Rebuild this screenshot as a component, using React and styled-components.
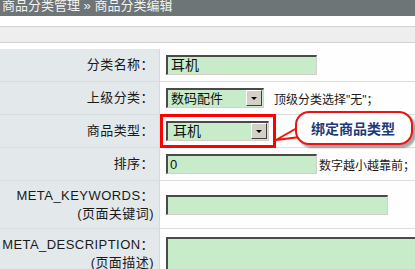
import styled, { createGlobalStyle } from "styled-components";

const GlobalStyle = createGlobalStyle`
  body {
    margin: 0;
    background: #fff;
    font-family: "Liberation Sans", "Noto Sans CJK SC", sans-serif;
    font-size: 13px;
    color: #1a1a1a;
    overflow: hidden;
  }
`;

const Page = styled.div`
  position: relative;
  width: 415px;
  height: 269px;
  overflow: hidden;
`;

const TitleBar = styled.div`
  height: 16px;
  background: #6e7576;
  color: #f2f2f2;
  font-size: 13px;
  line-height: 11px;
  padding-left: 2px;
  white-space: nowrap;
  overflow: hidden;
`;

const SubBar = styled.div`
  margin: 10px 0 6px;
  height: 15px;
  background: #eeeeee;
  border-top: 1px solid #d3d3d3;
  border-bottom: 1px solid #d3d3d3;
`;

const Row = styled.div`
  display: grid;
  grid-template-columns: 160px 1fr;
  height: ${(p) => p.$h || 32}px;
  border-bottom: 1px solid #dadddf;
`;

const Label = styled.div`
  display: flex;
  flex-direction: column;
  justify-content: ${(p) => (p.$top ? "flex-start" : "center")};
  align-items: flex-end;
  padding: ${(p) => (p.$top ? "7px 5px 0 0" : "0 5px 0 0")};
  background: #e3e8eb;
  border-right: 1px solid #d5d9dc;
  line-height: 18px;
  letter-spacing: 0.45px;
  text-align: right;
  white-space: nowrap;
`;

const Field = styled.div`
  position: relative;
  display: flex;
  align-items: ${(p) => (p.$top ? "flex-start" : "center")};
  padding: ${(p) => (p.$top ? "8px 0 0 6px" : "0 0 0 6px")};
  background: #fefefe;
  white-space: nowrap;
`;

const TextBox = styled.div`
  box-sizing: border-box;
  width: ${(p) => p.$w}px;
  height: ${(p) => p.$hh || 20}px;
  flex-shrink: 0;
  background: #c8ecca;
  border-top: 2px solid #4a4a4a;
  border-left: 2px solid #4a4a4a;
  border-bottom: 1px solid #d4d0c8;
  border-right: 1px solid #d4d0c8;
  padding-left: ${(p) => p.$pad ?? 3}px;
  font-size: ${(p) => p.$fs || 13}px;
  line-height: 17px;
  color: #111;
`;

const SelectBox = styled(TextBox)`
  display: flex;
  justify-content: space-between;
  padding-right: 1px;
`;

const DropButton = styled.span`
  box-sizing: border-box;
  width: 16px;
  height: 16px;
  background: #d4d0c8;
  border-top: 1px solid #fff;
  border-left: 1px solid #fff;
  border-right: 1px solid #404040;
  border-bottom: 1px solid #404040;
  display: flex;
  align-items: center;
  justify-content: center;

  &::after {
    content: "";
    border-left: 3px solid transparent;
    border-right: 3px solid transparent;
    border-top: 3px solid #000;
    margin-top: 1px;
  }
`;

const Hint = styled.span`
  margin-left: ${(p) => p.$gap ?? 10}px;
  font-size: 12px;
`;

const Highlight = styled.div`
  position: absolute;
  left: 0;
  top: -1px;
  width: 116px;
  height: 34px;
  box-sizing: border-box;
  border: 3px solid #ff0000;
`;

const Callout = styled.div`
  position: absolute;
  left: 295px;
  top: 111px;
  width: 118px;
  height: 34px;
  box-sizing: border-box;
  border: 2px solid #ee1111;
  border-radius: 14px;
  background: #fff;
  box-shadow: 3px 3px 2px rgba(0, 0, 0, 0.35);
  display: flex;
  align-items: center;
  justify-content: center;
  padding-right: 2px;
  color: #1e3a78;
  font-weight: bold;
  font-size: 14px;
`;

const Tail = styled.svg`
  position: absolute;
  left: 270px;
  top: 120px;
  overflow: visible;
`;

export default function App() {
  return (
    <Page>
      <GlobalStyle />
      <TitleBar>商品分类管理 » 商品分类编辑</TitleBar>
      <SubBar />
      <div>
        <Row>
          <Label>分类名称：</Label>
          <Field>
            <TextBox $w={151} $fs={14}>耳机</TextBox>
          </Field>
        </Row>
        <Row>
          <Label>上级分类：</Label>
          <Field>
            <SelectBox $w={98}>
              数码配件
              <DropButton />
            </SelectBox>
            <Hint>顶级分类选择"无"；</Hint>
          </Field>
        </Row>
        <Row>
          <Label>商品类型：</Label>
          <Field>
            <SelectBox $w={103} $fs={14} $pad={5}>
              耳机
              <DropButton />
            </SelectBox>
            <Highlight />
          </Field>
        </Row>
        <Row>
          <Label>排序：</Label>
          <Field>
            <TextBox $w={151} $pad={2}>0</TextBox>
            <Hint $gap={2}>数字越小越靠前；</Hint>
          </Field>
        </Row>
        <Row $h={47}>
          <Label>
            <span>META_KEYWORDS：</span>
            <span>(页面关键词)</span>
          </Label>
          <Field>
            <TextBox $w={222} />
          </Field>
        </Row>
        <Row $h={70}>
          <Label $top>
            <span>META_DESCRIPTION：</span>
            <span>(页面描述)</span>
          </Label>
          <Field $top>
            <TextBox $w={290} $hh={60} />
          </Field>
        </Row>
      </div>
      <Tail width="30" height="25">
        <path d="M27 8 L6 20 L30 17" fill="#fff" stroke="#ee1111" strokeWidth="2" />
      </Tail>
      <Callout>绑定商品类型</Callout>
    </Page>
  );
}
